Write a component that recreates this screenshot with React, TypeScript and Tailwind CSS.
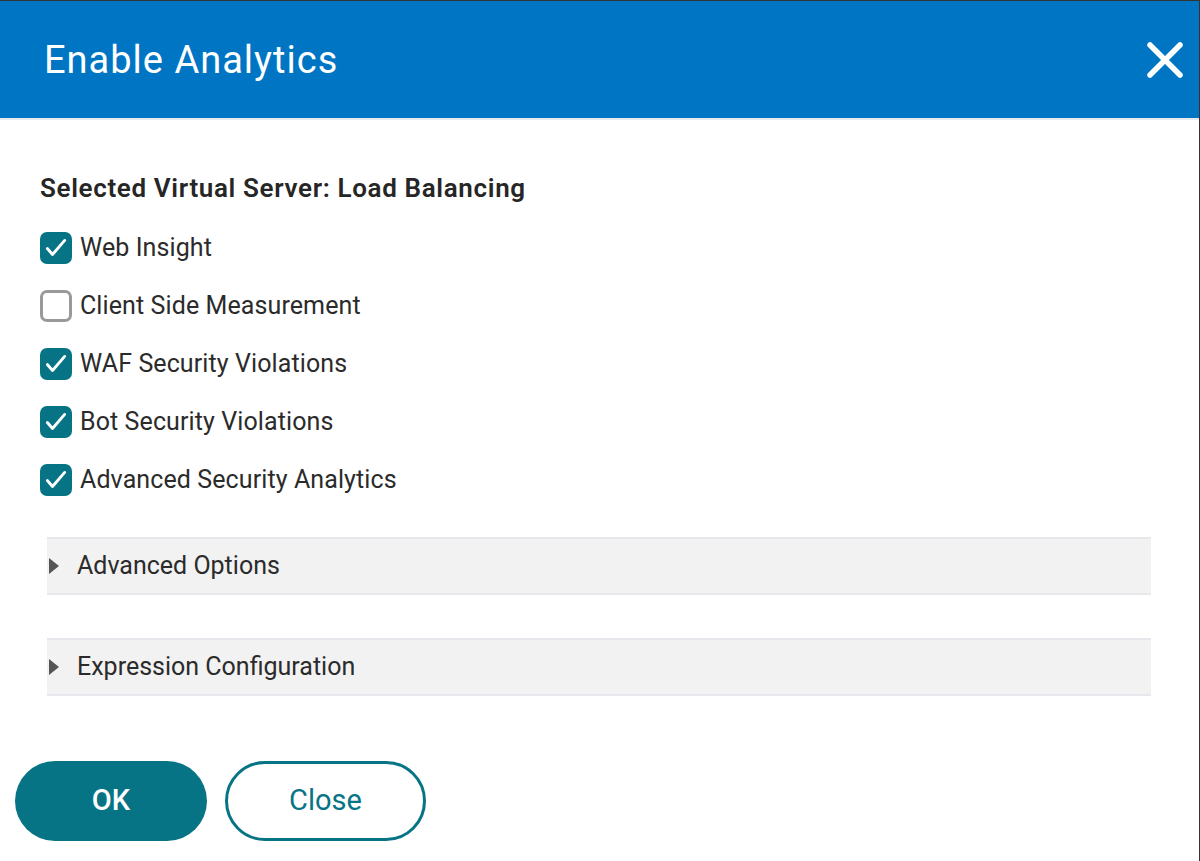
import { X } from "lucide-react";

const options = [
  { label: "Web Insight", checked: true },
  { label: "Client Side Measurement", checked: false },
  { label: "WAF Security Violations", checked: true },
  { label: "Bot Security Violations", checked: true },
  { label: "Advanced Security Analytics", checked: true },
];

const sections = ["Advanced Options", "Expression Configuration"];

function Checkbox({ checked }: { checked: boolean }) {
  if (!checked) {
    return <div className="h-8 w-8 shrink-0 rounded-[7px] border-[3px] border-[#999999] bg-white" />;
  }
  return (
    <div className="flex h-8 w-8 shrink-0 items-center justify-center rounded-[7px] bg-[#077486]">
      <svg viewBox="0 0 24 24" className="h-[26px] w-[26px]" fill="none" stroke="white" strokeWidth="2.6" strokeLinecap="round" strokeLinejoin="round">
        <path d="M4 12.5l4.8 5.5L20 5" />
      </svg>
    </div>
  );
}

export default function App() {
  return (
    <div className="flex h-[861px] w-[1200px] flex-col border-t border-r border-[#333333] bg-white font-['Roboto',sans-serif] text-[#222222]">
      <header className="flex h-[119px] shrink-0 items-center justify-between border-b-2 border-[#e6ebf0] bg-[#0075c4] pl-11 pr-1">
        <h1 className="text-[38px] font-normal leading-none tracking-[1px] text-white">Enable Analytics</h1>
        <X className="h-[60px] w-[60px] text-white" strokeWidth={2.2} />
      </header>

      <div className="flex flex-col px-10 pt-[51px]">
        <h2 className="text-[26px] font-semibold leading-[34px] tracking-[0.65px] text-[#262626]">Selected Virtual Server: Load Balancing</h2>

        <div className="mt-[27px] flex flex-col gap-[26px]">
          {options.map((o) => (
            <label key={o.label} className="flex items-center gap-2">
              <Checkbox checked={o.checked} />
              <span className="text-[25px] leading-8 tracking-[0.1px] text-[#2b2b2b]">{o.label}</span>
            </label>
          ))}
        </div>

        <div className="mt-[41px] mr-[8px] ml-[7px] flex flex-col gap-[43px]">
          {sections.map((s) => (
            <div key={s} className="flex h-[58px] items-center gap-[18px] border-y-2 border-[#e6e8eb] bg-[#f2f2f2]">
              <svg viewBox="0 0 10 16" className="ml-[2px] h-4 w-[10px]" fill="#555555">
                <path d="M0 0l10 8-10 8z" />
              </svg>
              <span className="text-[25px] text-[#2b2b2b]">{s}</span>
            </div>
          ))}
        </div>
      </div>

      <div className="mt-[65px] flex gap-[18px] pl-[15px]">
        <button className="h-20 w-[192px] rounded-full bg-[#077486] text-[29px] font-medium text-white">OK</button>
        <button className="h-20 w-[201px] rounded-full border-[3px] border-[#077486] bg-white text-[29px] text-[#077486]">Close</button>
      </div>
    </div>
  );
}
